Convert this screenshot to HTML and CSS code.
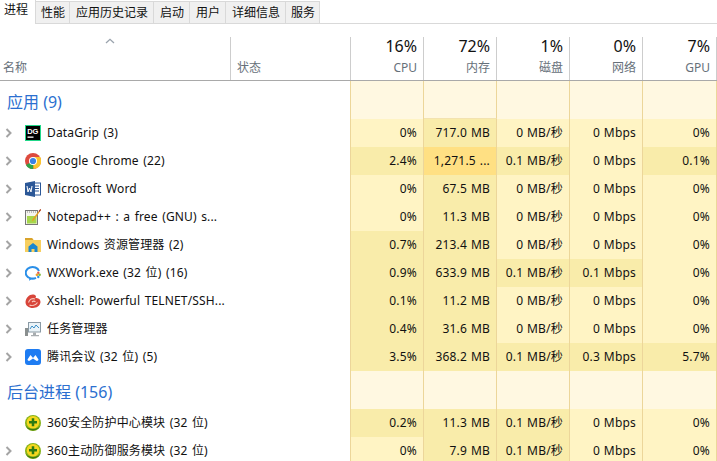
FILE: index.html
```html
<!DOCTYPE html>
<html lang="zh">
<head>
<meta charset="utf-8">
<title>任务管理器</title>
<link rel="stylesheet" href="styles.css">
</head>
<body>
<svg class="defs" width="0" height="0" aria-hidden="true">
  <defs>
    <symbol id="chev" viewBox="0 0 8 10"><path d="M1.500 1 5.500 5 1.500 9" fill="none" stroke="#a4a4a4" stroke-width="2"/></symbol>
    <symbol id="i360" viewBox="0 0 16 16">
      <circle cx="8" cy="8" r="8" fill="#86b31a"/>
      <path d="M.3 9.500a7.800 7 0 0 0 15.400 0a7.800 5 0 0 1-15.400 0z" fill="#3f7a10"/>
      <circle cx="8" cy="7.200" r="6.300" fill="#f6d71e"/>
      <path d="M8 3.200v8M4 7.200h8" stroke="#2c7a12" stroke-width="2.500"/>
    </symbol>
  </defs>
</svg>
<nav class="tabs">
  <span class="tab tab-active">进程</span>
  <span class="tab tab-narrow">性能</span>
  <span class="tab">应用历史记录</span>
  <span class="tab">启动</span>
  <span class="tab">用户</span>
  <span class="tab">详细信息</span>
  <span class="tab tab-narrow">服务</span>
</nav>
<main class="table">
  <header class="row head">
    <div class="hcell hname"><svg class="sort" viewBox="0 0 10 6" width="10" height="6"><path d="M1 5 5 1.300 9 5" fill="none" stroke="#9aa3ad" stroke-width="1.300"/></svg><span class="hlabel">名称</span></div>
    <div class="hcell hstatus"><span class="hlabel">状态</span></div>
    <div class="hcell hnum"><span class="pct">16%</span><span class="hlabel">CPU</span></div>
    <div class="hcell hnum"><span class="pct">72%</span><span class="hlabel">内存</span></div>
    <div class="hcell hnum"><span class="pct">1%</span><span class="hlabel">磁盘</span></div>
    <div class="hcell hnum"><span class="pct">0%</span><span class="hlabel">网络</span></div>
    <div class="hcell hnum"><span class="pct">7%</span><span class="hlabel">GPU</span></div>
  </header>

  <section class="row group">
    <div class="gname">应用 (9)</div><div class="st"></div>
    <div class="c s"></div><div class="c s s-mem"></div><div class="c s"></div><div class="c s"></div><div class="c s"></div>
  </section>

  <div class="row item">
    <div class="name"><svg class="chev"><use href="#chev"/></svg>
      <svg class="ico" viewBox="0 0 16 16"><rect x=".5" y=".5" width="15" height="15" fill="#000" stroke="#21d789"/><text x="2.200" y="8.800" class="dg">DG</text><rect x="2.500" y="11.500" width="6" height="1.300" fill="#fff"/></svg>
      <span class="label">DataGrip (3)</span></div><div class="st"></div>
    <div class="c l0">0%</div><div class="c l1">717.0 MB</div><div class="c l0">0 MB/秒</div><div class="c l0">0 Mbps</div><div class="c l0">0%</div>
  </div>

  <div class="row item">
    <div class="name"><svg class="chev"><use href="#chev"/></svg>
      <svg class="ico" viewBox="0 0 16 16"><circle cx="8" cy="8" r="8" fill="#dd4b3e"/><path d="M8 8 1 12A8 8 0 0 0 8.500 16z" fill="#2da44a"/><path d="M8 4h7.200A8 8 0 0 1 8.500 16z" fill="#fbc42d"/><circle cx="8" cy="8" r="4" fill="#fff"/><circle cx="8" cy="8" r="3.100" fill="#3b82e4"/></svg>
      <span class="label">Google Chrome (22)</span></div><div class="st"></div>
    <div class="c l1">2.4%</div><div class="c l2">1,271.5 ...</div><div class="c l1">0.1 MB/秒</div><div class="c l0">0 Mbps</div><div class="c l1">0.1%</div>
  </div>

  <div class="row item">
    <div class="name"><svg class="chev"><use href="#chev"/></svg>
      <svg class="ico" viewBox="0 0 16 16"><rect x="7" y="2" width="8.500" height="12" fill="#fff" stroke="#2b5797"/><path d="M9.500 5h4.500M9.500 7.500h4.500M9.500 10h4.500" stroke="#2b5797"/><path d="M0 2 10 0v16L0 14z" fill="#2b5797"/><path d="M2 5l1 6 1.500-4 1.500 4 1-6" fill="none" stroke="#fff"/></svg>
      <span class="label">Microsoft Word</span></div><div class="st"></div>
    <div class="c l0">0%</div><div class="c l1">67.5 MB</div><div class="c l0">0 MB/秒</div><div class="c l0">0 Mbps</div><div class="c l0">0%</div>
  </div>

  <div class="row item">
    <div class="name"><svg class="chev"><use href="#chev"/></svg>
      <svg class="ico" viewBox="0 0 16 16"><rect x=".5" y="1.500" width="12" height="14" fill="#f4f4ee" stroke="#777"/><path d="M2 3h9" stroke="#888" stroke-dasharray="1 1"/><rect x="2" y="7" width="9.500" height="7.500" fill="#a6d64c"/><path d="M15.500 0 16 1 9 11 7 12.500 7.500 10z" fill="#e8a020"/><path d="M15.500 0 16 1 14.500 3 13.500 2z" fill="#a33"/></svg>
      <span class="label">Notepad++ : a free (GNU) s...</span></div><div class="st"></div>
    <div class="c l0">0%</div><div class="c l1">11.3 MB</div><div class="c l0">0 MB/秒</div><div class="c l0">0 Mbps</div><div class="c l0">0%</div>
  </div>

  <div class="row item">
    <div class="name"><svg class="chev"><use href="#chev"/></svg>
      <svg class="ico" viewBox="0 0 16 16"><path d="M0 1h7l1.500 2H16v12H0z" fill="#f8cf5f"/><path d="M0 1h7l1.500 2H0z" fill="#d9a32b"/><path d="M3.500 9.500 8 6l4.500 3.500V15h-3v-3h-3v3h-3z" fill="#1a86d0"/></svg>
      <span class="label">Windows 资源管理器 (2)</span></div><div class="st"></div>
    <div class="c l1">0.7%</div><div class="c l1">213.4 MB</div><div class="c l0">0 MB/秒</div><div class="c l0">0 Mbps</div><div class="c l0">0%</div>
  </div>

  <div class="row item">
    <div class="name"><svg class="chev"><use href="#chev"/></svg>
      <svg class="ico" viewBox="0 0 16 16"><path d="M11 12.800A6.800 5.800 0 1 1 14 6" fill="none" stroke="#2a8fe8" stroke-width="2"/><path d="M4.500 12.500 4 15.800 8 13.500" fill="#2a8fe8"/><circle cx="12" cy="9.800" r="1.400" fill="#f0a02a"/><circle cx="14.600" cy="9.800" r="1.300" fill="#7dbb3a"/><circle cx="13.300" cy="7.800" r="1.200" fill="#e05a4a"/><circle cx="13.300" cy="12" r="1.200" fill="#2a8fe8"/></svg>
      <span class="label">WXWork.exe (32 位) (16)</span></div><div class="st"></div>
    <div class="c l1">0.9%</div><div class="c l1">633.9 MB</div><div class="c l1">0.1 MB/秒</div><div class="c l1">0.1 Mbps</div><div class="c l0">0%</div>
  </div>

  <div class="row item">
    <div class="name"><svg class="chev"><use href="#chev"/></svg>
      <svg class="ico" viewBox="0 0 16 16"><path d="M.5 9C1 4.500 4.500 1 8.500 1.500c3 .4 3.200 3.200 1.200 3.800 3.800-1.200 6 1.500 5.800 4C15 13 11.500 15 8 15 3.500 15 .5 12.500.5 9z" fill="#d8453a"/><path d="M3.500 9.500c1-3.500 4-4.500 6.500-3.500M4.500 12c2.500 1.200 6 .5 8-2.500M7 9c1-1 2.500-1 3.500-.3" fill="none" stroke="#f8c9bd" stroke-width="1.100"/></svg>
      <span class="label">Xshell: Powerful TELNET/SSH...</span></div><div class="st"></div>
    <div class="c l1">0.1%</div><div class="c l1">11.2 MB</div><div class="c l0">0 MB/秒</div><div class="c l0">0 Mbps</div><div class="c l0">0%</div>
  </div>

  <div class="row item">
    <div class="name"><svg class="chev"><use href="#chev"/></svg>
      <svg class="ico" viewBox="0 0 16 16"><rect x="0" y="7" width="3" height="8" fill="#8a8f8f"/><rect x="3.500" y="1.500" width="12" height="9.500" fill="#eaf3f8" stroke="#8a9aa5"/><path d="M5 8l2-3 2 2 2-3 3 3" fill="none" stroke="#3a8fc8"/><path d="M8 11.500h3V14H8zM6 14h8v1.300H6z" fill="#a8adb0"/></svg>
      <span class="label">任务管理器</span></div><div class="st"></div>
    <div class="c l1">0.4%</div><div class="c l1">31.6 MB</div><div class="c l0">0 MB/秒</div><div class="c l0">0 Mbps</div><div class="c l0">0%</div>
  </div>

  <div class="row item">
    <div class="name"><svg class="chev"><use href="#chev"/></svg>
      <svg class="ico" viewBox="0 0 16 16"><rect width="16" height="16" rx="3" fill="#1e7cf2"/><path d="M2.500 10.500 5.500 6l2.500 3 2.500-3 3 4.500a1.500 1.500 0 0 1-2.500 1L8 9.500l-3 2a1.500 1.500 0 0 1-2.500-1z" fill="#fff"/></svg>
      <span class="label">腾讯会议 (32 位) (5)</span></div><div class="st"></div>
    <div class="c l1">3.5%</div><div class="c l1">368.2 MB</div><div class="c l1">0.1 MB/秒</div><div class="c l1">0.3 Mbps</div><div class="c l1">5.7%</div>
  </div>

  <section class="row group">
    <div class="gname">后台进程 (156)</div><div class="st"></div>
    <div class="c s"></div><div class="c s"></div><div class="c s"></div><div class="c s"></div><div class="c s"></div>
  </section>

  <div class="row item">
    <div class="name"><span class="chev"></span>
      <svg class="ico"><use href="#i360"/></svg>
      <span class="label">360安全防护中心模块 (32 位)</span></div><div class="st"></div>
    <div class="c l1">0.2%</div><div class="c l1">11.3 MB</div><div class="c l1">0.1 MB/秒</div><div class="c l0">0 Mbps</div><div class="c l0">0%</div>
  </div>

  <div class="row item">
    <div class="name"><svg class="chev"><use href="#chev"/></svg>
      <svg class="ico"><use href="#i360"/></svg>
      <span class="label">360主动防御服务模块 (32 位)</span></div><div class="st"></div>
    <div class="c l0">0%</div><div class="c l1">7.9 MB</div><div class="c l1">0.1 MB/秒</div><div class="c l0">0 Mbps</div><div class="c l0">0%</div>
  </div>
</main>
</body>
</html>
```
FILE: styles.css
```css
* { box-sizing: border-box; }
html, body { margin: 0; padding: 0; }
body {
  width: 717px;
  height: 461px;
  overflow: hidden;
  background: #fff;
  color: #111;
  font: 12px/16px "Noto Sans", "Noto Sans CJK SC", sans-serif;
}
.defs { display: block; height: 0; }
.tabs {
  display: flex;
  height: 24px;
  padding-top: 1px;
  border-bottom: 1px solid #d9d9d9;
  align-items: stretch;
}
.tab {
  padding: 3px 5px 0 6px;
  background: #f0f0f0;
  border: 1px solid #d9d9d9;
  border-left: 0;
  border-bottom: 0;
}
.tab-narrow { padding: 3px 4px 0 5px; }
.tab-active {
  width: 36px;
  margin: -1px 0 -1px;
  padding: 2px 0 0 4px;
  background: #fff;
  border: 0;
  border-right: 1px solid #d9d9d9;
}
.table { margin-top: 13px; }
.row {
  display: grid;
  grid-template-columns: 231px 120px 73px 73px 73px 73px 74px;
}
.head {
  height: 44px;
  border-bottom: 1px solid #a9a9a9;
  background: #fff;
}
.hcell {
  display: flex;
  flex-direction: column;
  border-right: 1px solid #cdcdcd;
  padding: 0 5px 4px 3px;
  color: #66707a;
}
.hname { position: relative; justify-content: flex-end; }
.sort { position: absolute; left: 105px; top: 1px; }
.hstatus { justify-content: flex-end; padding-left: 6px; }
.hnum { align-items: flex-end; justify-content: flex-end; padding-right: 6px; }
.hlabel { line-height: 16px; }
.pct { font-size: 16px; line-height: 18px; color: #111; margin-bottom: 5px; }
.group { height: 38px; align-items: stretch; }
.gname {
  padding: 12px 0 0 7px;
  font-size: 16px;
  line-height: 18px;
  color: #2b6fd0;
  white-space: nowrap;
}
.item { height: 28px; }
.st { border-right: 1px solid #ecd69a; }
.name {
  display: flex;
  align-items: center;
  white-space: nowrap;
  overflow: hidden;
  padding-left: 5px;
}
.chev { width: 8px; height: 10px; flex: none; margin-right: 12px; }
.ico { width: 16px; height: 16px; flex: none; margin-right: 6px; }
.label { letter-spacing: .15px; word-spacing: 1.2px; }
.dg { font: 700 7.500px "Liberation Sans", sans-serif; fill: #fff; }
.c {
  display: flex;
  align-items: center;
  justify-content: flex-end;
  padding-right: 6px;
  border-right: 1px solid #ecd69a;
  white-space: nowrap;
  letter-spacing: .2px;
  word-spacing: .5px;
}
.s { background: #fff8e1; }
.s-mem { border-bottom: 1px solid #f3e3b0; }
.l0 { background: #fff4c4; }
.l1 { background: #f9ecaa; }
.l2 { background: #ffe083; }
```
